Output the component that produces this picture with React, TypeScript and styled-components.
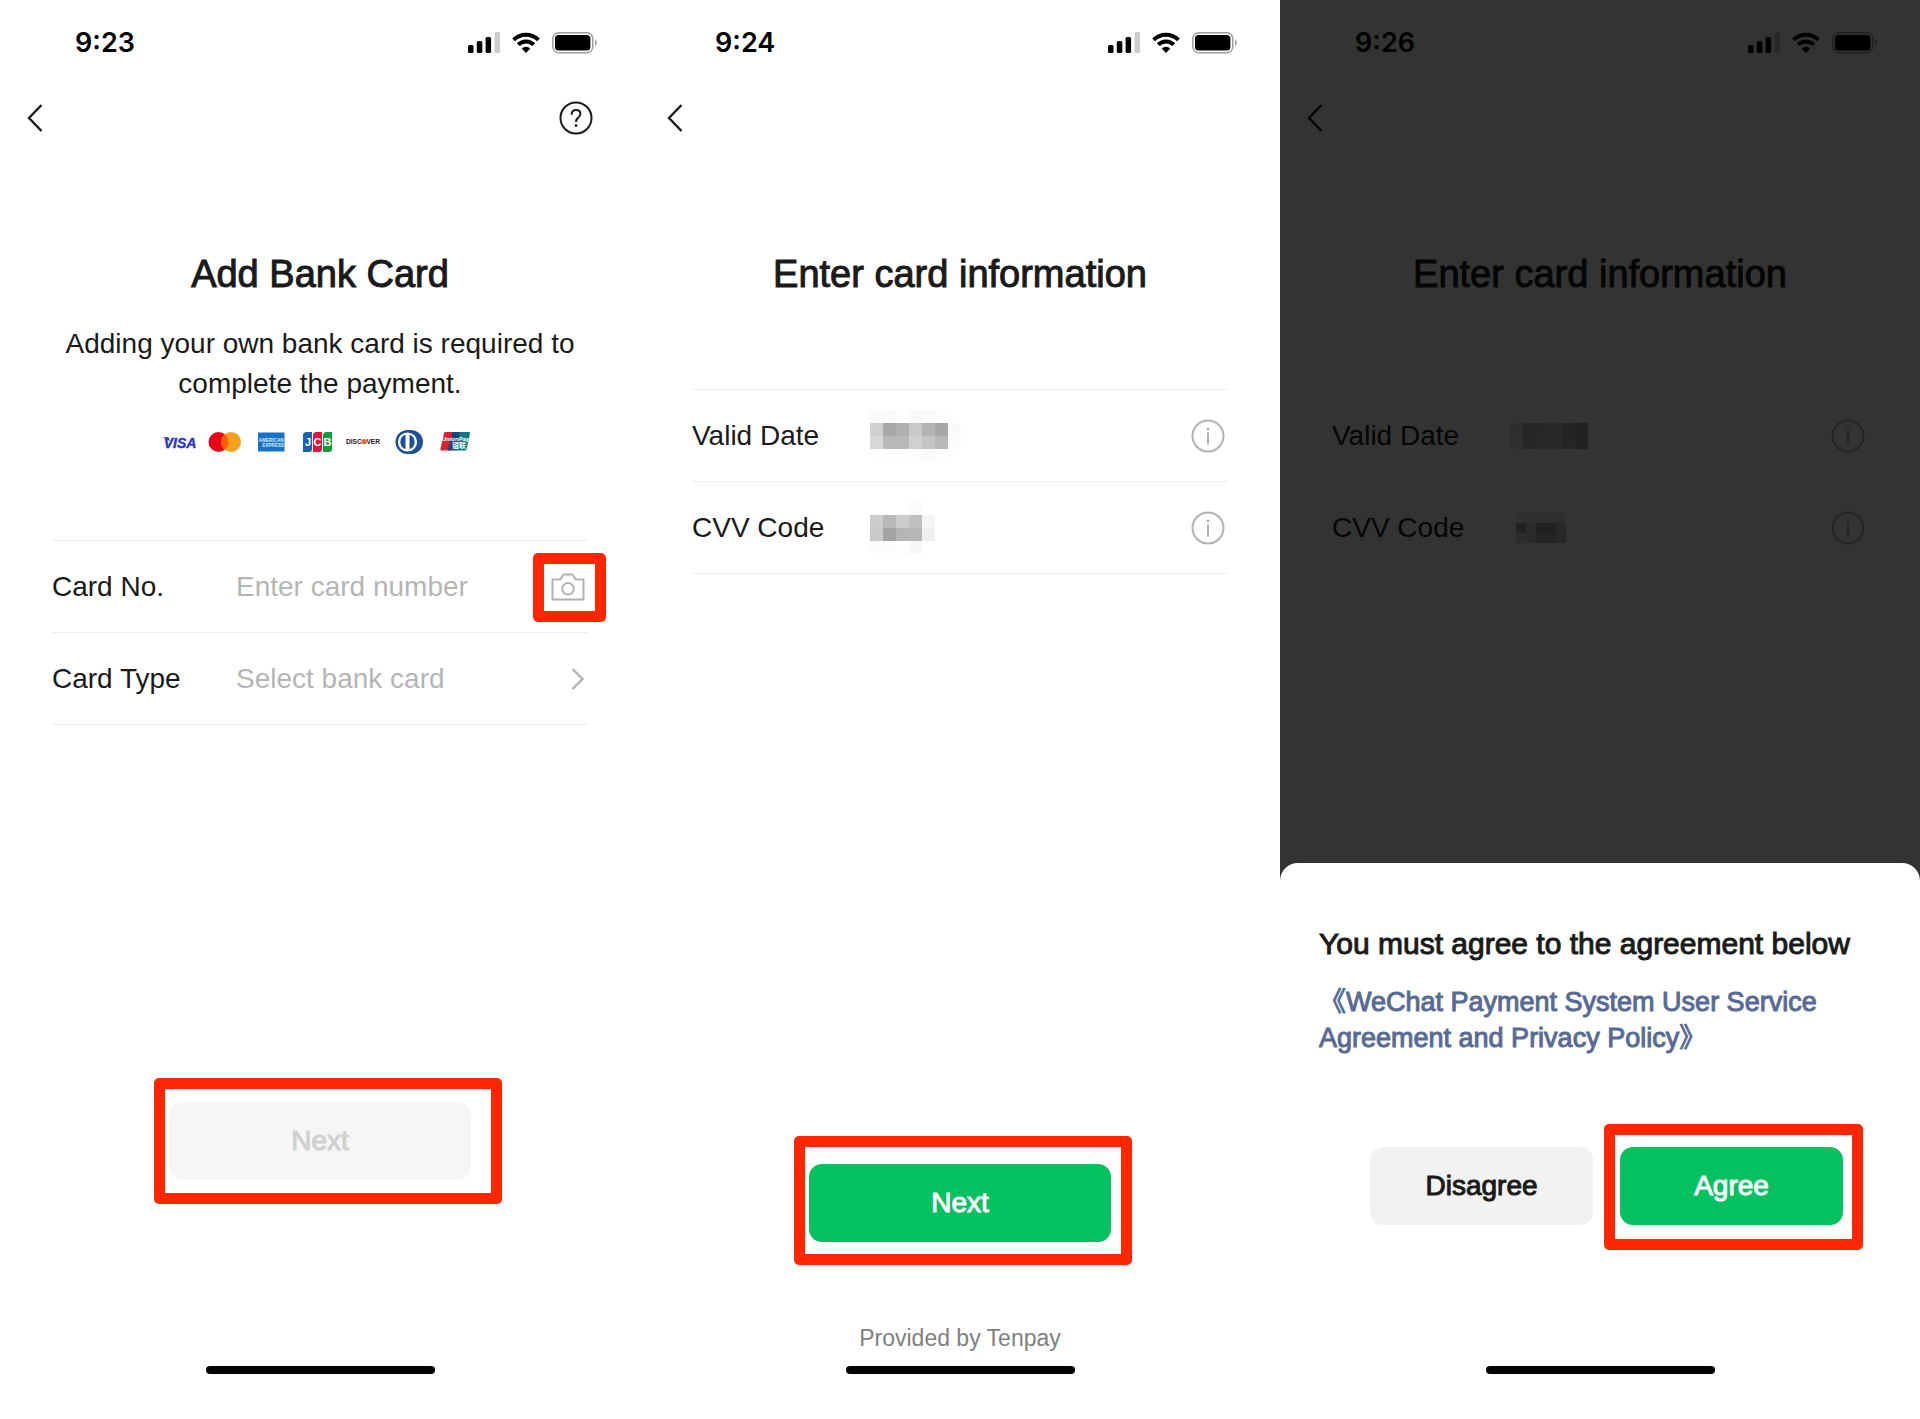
import React from 'react';
import styled, { createGlobalStyle } from 'styled-components';

const GlobalStyle = createGlobalStyle`
  *, *::before, *::after { box-sizing: border-box; }
  body {
    margin: 0;
    background: #fff;
    color: #1a1a1a;
    font-family: "Liberation Sans", Arial, "Noto Sans CJK SC", sans-serif;
    font-size: 28px;
    line-height: 40px;
  }
  h1, h2, p { margin: 0; font-weight: 400; }
  button, input, select { font: inherit; color: inherit; }
`;

const Screens = styled.main`
  display: grid;
  grid-template-columns: repeat(3, minmax(0, 1fr));
  min-height: 100vh;
`;

const Screen = styled.section`
  position: relative;
  display: flex;
  flex-direction: column;
  background: #fff;
`;

const StatusBar = styled.div`
  display: flex;
  align-items: center;
  justify-content: space-between;
  height: 86px;
  padding: 0 43px 0 75px;
  color: #000;
`;

const Clock = styled.span`
  font-family: Inter, "Liberation Sans", sans-serif;
  font-size: 27px;
  font-weight: 600;
`;

const StatusIcons = styled.div`
  display: flex;
  align-items: center;
  gap: 12px;
`;

const NavBar = styled.nav`
  display: flex;
  align-items: center;
  justify-content: space-between;
  height: 63px;
  padding: 0 47px 0 27px;
`;

const IconButton = styled.button`
  display: flex;
  padding: 0;
  border: 0;
  background: none;
  cursor: pointer;
`;

const Body = styled.div`
  display: flex;
  flex: 1;
  flex-direction: column;
  align-items: center;
  padding: 101px 52px 45px;
`;

const Title = styled.h1`
  font-size: 38px;
  line-height: 48px;
  text-align: center;
  -webkit-text-stroke: 1px currentColor;
`;

const Intro = styled.p`
  margin-top: 26px;
  text-align: center;
`;

const Brands = styled.div`
  display: flex;
  gap: 12px;
  margin-top: 26px;
  padding-right: 6px;
`;

const Fields = styled.div<{ $gap: number }>`
  align-self: stretch;
  margin-top: ${(p) => p.$gap}px;
  border-top: 1px solid #ededed;
`;

const Field = styled.div`
  display: flex;
  align-items: center;
  height: 92px;
  padding-right: 3px;
  border-bottom: 1px solid #ededed;
`;

const FieldLabel = styled.label<{ $width: number }>`
  flex: 0 0 ${(p) => p.$width}px;
`;

const FieldName = styled(FieldLabel).attrs({ as: 'span' })``;

const FieldValue = styled.div`
  flex: 1;
`;

const TextInput = styled.input`
  flex: 1;
  min-width: 0;
  padding: 0;
  border: 0;
  outline: 0;
  background: none;
  &::placeholder { color: #b5b5b5; opacity: 1; }
`;

const Select = styled.select`
  flex: 1;
  min-width: 0;
  height: 40px;
  padding: 0;
  border: 0;
  outline: 0;
  appearance: none;
  background: none;
  color: #b5b5b5;
`;

const MosaicGrid = styled.div<{ $columns: number; $cell: number }>`
  display: grid;
  grid-template-columns: repeat(${(p) => p.$columns}, ${(p) => p.$cell}px);
  grid-auto-rows: ${(p) => p.$cell}px;
`;

const Actions = styled.div`
  display: flex;
  flex-direction: column;
  align-items: center;
  margin-top: auto;
`;

const Marked = styled.div<{ $grow?: boolean }>`
  position: relative;
  display: flex;
  flex: ${(p) => (p.$grow ? '1 1 0' : 'none')};
  min-width: 0;
`;

/* Red annotation frame drawn over the control it points out. */
const Frame = styled.span<{ $outset: [number, number, number, number] }>`
  position: absolute;
  inset: ${(p) => p.$outset.map((n) => `-${n}px`).join(' ')};
  border: 11px solid #ff2600;
  border-radius: 5px;
  pointer-events: none;
`;

const Button = styled.button<{ $tone: 'green' | 'grey'; $grow?: boolean }>`
  flex: ${(p) => (p.$grow ? '1 1 0' : 'none')};
  width: 302px;
  min-width: 0;
  height: 78px;
  padding: 0;
  border: 0;
  border-radius: 13px;
  background: ${(p) => (p.$tone === 'green' ? '#05c160' : '#f2f2f2')};
  color: ${(p) => (p.$tone === 'green' ? '#fff' : '#1a1a1a')};
  -webkit-text-stroke: 1px currentColor;
  cursor: pointer;
  &:disabled {
    background: #f6f6f6;
    color: #d0d0d0;
    cursor: default;
  }
`;

const Provider = styled.p`
  margin-top: 82px;
  color: #808080;
  font-size: 23px;
  line-height: 28px;
`;

const HomeIndicator = styled.div<{ $gap: number }>`
  width: 229px;
  height: 8px;
  margin: ${(p) => p.$gap}px auto 0;
  border-radius: 4px;
  background: #000;
`;

const Backdrop = styled.div`
  position: absolute;
  inset: 0;
  display: flex;
  flex-direction: column;
  justify-content: flex-end;
  background: rgba(0, 0, 0, 0.8);
`;

const Sheet = styled.div`
  padding: 61px 39px 45px;
  border-radius: 18px 18px 0 0;
  background: #fff;
`;

const SheetTitle = styled.h2`
  font-size: 30px;
  white-space: nowrap;
  -webkit-text-stroke: 1px currentColor;
`;

const Agreement = styled.p`
  margin-top: 20px;
  font-size: 27px;
  line-height: 36px;
`;

const AgreementLink = styled.a`
  color: #576b95;
  text-decoration: none;
  -webkit-text-stroke: 1px currentColor;
`;

const Choices = styled.div`
  display: flex;
  gap: 27px;
  margin-top: 91px;
  padding: 0 38px 0 51px;
`;

const Signal = () => (
  <svg width="32" height="22" viewBox="0 0 32 22" aria-hidden="true">
    <rect x="0" y="13" width="5.5" height="8" rx="1.6" />
    <rect x="8.8" y="9" width="5.5" height="12" rx="1.6" />
    <rect x="17.600" y="5" width="5.5" height="16" rx="1.6" />
    <rect x="26.5" y="0" width="5.5" height="21" rx="1.6" fill="#ccc" />
  </svg>
);

const Wifi = () => (
  <svg width="28" height="22" viewBox="0 0 28 22" aria-hidden="true">
    <g fill="none" stroke="#000" strokeWidth="4">
      <path d="M1.6 7.8a17.6 17.6 0 0 1 24.8 0" />
      <path d="M6.2 12.7a11 11 0 0 1 15.6 0" />
    </g>
    <path d="M14 21l-4.3-4.4a6.2 6.2 0 0 1 8.6 0z" />
  </svg>
);

const Battery = () => (
  <svg width="45" height="22" viewBox="0 0 45 22" aria-hidden="true">
    <rect x="0.8" y="0.8" width="40" height="20" rx="6" fill="none" stroke="#9e9e9e" strokeWidth="1.5" />
    <rect x="3" y="3" width="35.4" height="15.6" rx="3.6" />
    <path d="M43 7.5c2.4.9 2.4 5.7 0 6.6z" fill="#9e9e9e" />
  </svg>
);

const BackIcon = () => (
  <svg width="16" height="28" viewBox="0 0 16 28" fill="none" stroke="#1a1a1a" strokeWidth="2.4" aria-hidden="true">
    <path d="M14.5 1L2 14l12.500 13" />
  </svg>
);

const HelpIcon = () => (
  <svg width="34" height="34" viewBox="0 0 34 34" fill="none" stroke="#1a1a1a" strokeWidth="2" aria-hidden="true">
    <circle cx="17" cy="17" r="15.5" />
    <path d="M12.6 13.7c0-3 1.9-4.6 4.5-4.6 2.5 0 4.3 1.6 4.3 3.9 0 1.8-.9 2.8-2.3 3.8-1.5 1-2 1.7-2 3.3v1" />
    <circle cx="17" cy="24.6" r="1.4" fill="#1a1a1a" stroke="none" />
  </svg>
);

const InfoIcon = () => (
  <svg width="34" height="34" viewBox="0 0 34 34" fill="none" stroke="#b2b2b2" strokeWidth="2" aria-hidden="true">
    <circle cx="17" cy="17" r="15.5" />
    <path d="M17 13.5v12" />
    <circle cx="17" cy="10" r="1.5" fill="#b2b2b2" stroke="none" />
  </svg>
);

const CameraIcon = () => (
  <svg width="34" height="28" viewBox="0 0 34 28" fill="none" stroke="#b2b2b2" strokeWidth="2" strokeLinejoin="round" aria-hidden="true">
    <path d="M1.5 6.5h7.8l3.2-5h9l3.2 5h7.8v20h-31z" />
    <circle cx="17" cy="15.8" r="5.8" />
  </svg>
);

const ChevronIcon = () => (
  <svg width="14" height="22" viewBox="0 0 14 22" fill="none" stroke="#b2b2b2" strokeWidth="2.4" aria-hidden="true">
    <path d="M1.5 1l10 10-10 10" />
  </svg>
);

const brandFont = '"Liberation Sans", Arial, sans-serif';

const Visa = () => (
  <svg width="34" height="24" viewBox="0 0 34 24" role="img" aria-label="Visa">
    <path d="M1 7.300h5.500l1.500 4z" fill="#2b35c9" />
    <text x="18" y="17.500" fontFamily={brandFont} fontSize="14" fontWeight="700" fontStyle="italic" fill="#2b35c9" stroke="#2b35c9" strokeWidth="0.4" textAnchor="middle">VISA</text>
  </svg>
);

const Mastercard = () => (
  <svg width="34" height="24" viewBox="0 0 34 24" role="img" aria-label="Mastercard">
    <circle cx="10.5" cy="12" r="10" fill="#eb001b" />
    <circle cx="23" cy="12" r="10" fill="#f9a01b" />
    <path d="M16.75 4.2a10 10 0 0 1 0 15.6a10 10 0 0 1 0-15.6z" fill="#ff5f00" />
  </svg>
);

const Amex = () => (
  <svg width="34" height="24" viewBox="0 0 34 24" role="img" aria-label="American Express">
    <rect x="4" y="2.5" width="26.5" height="19" fill="#1673c6" />
    <g fontFamily={brandFont} fontSize="4.6" fontWeight="700" fill="#d8ebfb" textAnchor="middle">
      <text x="17.2" y="11.5">AMERICAN</text>
      <text x="19" y="16.5">EXPRESS</text>
    </g>
  </svg>
);

const Jcb = () => (
  <svg width="34" height="24" viewBox="0 0 34 24" role="img" aria-label="JCB">
    <path d="M6.5 2H12v17a3 3 0 0 1-3 3H3V5.500A3.500 3.500 0 0 1 6.5 2z" fill="#1763ad" />
    <path d="M16.500 2H22v17a3 3 0 0 1-3 3h-6V5.500A3.500 3.500 0 0 1 16.500 2z" fill="#e4123f" />
    <path d="M26.500 2H32v17a3 3 0 0 1-3 3h-6V5.500A3.500 3.500 0 0 1 26.500 2z" fill="#159c3a" />
    <g fontFamily={brandFont} fontSize="11" fontWeight="700" fill="#fff" textAnchor="middle">
      <text x="8" y="16">J</text>
      <text x="17.5" y="16">C</text>
      <text x="27.5" y="16">B</text>
    </g>
  </svg>
);

const Discover = () => (
  <svg width="34" height="24" viewBox="0 0 34 24" role="img" aria-label="Discover">
    <g fontFamily={brandFont} fontSize="6.6" fontWeight="700" fill="#222">
      <text x="0" y="14">DISC</text>
      <text x="34" y="14" textAnchor="end">VER</text>
    </g>
    <circle cx="18.2" cy="11.6" r="2.7" fill="#f2682c" />
  </svg>
);

const Diners = () => (
  <svg width="34" height="24" viewBox="0 0 34 24" role="img" aria-label="Diners Club">
    <path d="M15.500 0h3.500a12 12 0 0 1 0 24h-3.500a12 12 0 0 1 0-24z" fill="#1f4f94" />
    <circle cx="15.5" cy="12" r="9.6" fill="#fff" />
    <path d="M13.500 4.800a7.600 7.600 0 0 0 0 14.400zM17.500 4.800a7.600 7.600 0 0 1 0 14.400z" fill="#1f4f94" />
  </svg>
);

const UnionPay = () => (
  <svg width="34" height="24" viewBox="0 0 34 24" role="img" aria-label="UnionPay">
    <path d="M7 2h10l-4.500 18.500H3.500Q2 20.500 2.400 19L6 3q.2-1 1-1z" fill="#d8232f" />
    <path d="M14 2h9l-4.500 18.500H10z" fill="#1a4480" />
    <path d="M22 2h9q1.400 0 1 1.500L28.600 19q-.4 1.500-1.800 1.500h-9z" fill="#0e7a7d" />
    <text x="17.5" y="11" fontFamily={brandFont} fontSize="6" fontWeight="700" fontStyle="italic" fill="#fff" textAnchor="middle">UnionPay</text>
    <text x="21" y="18" fontFamily='"Noto Sans CJK SC", sans-serif' fontSize="7" fontWeight="700" fill="#fff" textAnchor="middle">银联</text>
  </svg>
);

function Header({ time, help }: { time: string; help?: boolean }) {
  return (
    <>
      <StatusBar>
        <Clock>{time}</Clock>
        <StatusIcons>
          <Signal />
          <Wifi />
          <Battery />
        </StatusIcons>
      </StatusBar>
      <NavBar>
        <IconButton aria-label="Back"><BackIcon /></IconButton>
        {help && <IconButton aria-label="Help"><HelpIcon /></IconButton>}
      </NavBar>
    </>
  );
}

type MosaicData = { cell: number; rows: string[][] };

/* Pixelated stand-in for a hidden value. */
function Mosaic({ cell, rows }: MosaicData) {
  return (
    <MosaicGrid $columns={rows[0].length} $cell={cell} role="img" aria-label="Hidden value">
      {rows.flat().map((shade, i) => (
        <span key={i} style={{ background: `#${shade.repeat(3)}` }} />
      ))}
    </MosaicGrid>
  );
}

const dateMosaic: MosaicData = {
  cell: 13,
  rows: [
    ['fb', 'fa', 'fe', 'f9', 'f9', 'fd', 'ff'],
    ['d0', 'a8', 'b0', 'c9', 'b3', 'a7', 'fa'],
    ['d8', 'b8', 'b8', 'd0', 'c5', 'b9', 'fb'],
    ['fe', 'fe', 'fe', 'fd', 'fb', 'fe', 'ff'],
  ],
};

const cvvMosaic: MosaicData = {
  cell: 13,
  rows: [
    ['ff', 'ff', 'ff', 'fb', 'ff'],
    ['cd', 'b8', 'cc', 'bf', 'f5'],
    ['c9', 'a4', 'b5', 'b6', 'ef'],
    ['fc', 'fc', 'fd', 'f7', 'ff'],
  ],
};

const dimDateMosaic: MosaicData = {
  cell: 13,
  rows: [
    ['e4', 'be', 'c0', 'cd', 'b4', 'a8'],
    ['e8', 'c2', 'c6', 'cd', 'ba', 'aa'],
  ],
};

const dimCvvMosaic: MosaicData = {
  cell: 10,
  rows: [
    ['ef', 'ef', 'e6', 'e4', 'e8'],
    ['a8', 'd8', 'a0', 'a0', 'c0'],
    ['e0', 'd0', 'b4', 'b4', 'c4'],
  ],
};

function CardInformation({ date, cvv, cvvIndent }: { date: MosaicData; cvv: MosaicData; cvvIndent: number }) {
  return (
    <>
      <Title>Enter card information</Title>
      <Fields $gap={91}>
        <Field>
          <FieldName $width={178}>Valid Date</FieldName>
          <FieldValue><Mosaic {...date} /></FieldValue>
          <IconButton aria-label="About the valid date"><InfoIcon /></IconButton>
        </Field>
        <Field>
          <FieldName $width={cvvIndent}>CVV Code</FieldName>
          <FieldValue><Mosaic {...cvv} /></FieldValue>
          <IconButton aria-label="About the CVV code"><InfoIcon /></IconButton>
        </Field>
      </Fields>
    </>
  );
}

export default function App() {
  return (
    <>
      <GlobalStyle />
      <Screens>
        <Screen>
          <Header time="9:23" help />
          <Body>
            <Title>Add Bank Card</Title>
            <Intro>
              Adding your own bank card is required to
              <br />
              complete the payment.
            </Intro>
            <Brands>
              <Visa />
              <Mastercard />
              <Amex />
              <Jcb />
              <Discover />
              <Diners />
              <UnionPay />
            </Brands>
            <Fields $gap={86}>
              <Field>
                <FieldLabel htmlFor="card-number" $width={184}>Card No.</FieldLabel>
                <TextInput id="card-number" placeholder="Enter card number" />
                <Marked>
                  <IconButton aria-label="Scan card"><CameraIcon /></IconButton>
                  <Frame $outset={[20, 21, 21, 18]} />
                </Marked>
              </Field>
              <Field>
                <FieldLabel htmlFor="card-type" $width={184}>Card Type</FieldLabel>
                <Select id="card-type" defaultValue="">
                  <option value="">Select bank card</option>
                </Select>
                <ChevronIcon />
              </Field>
            </Fields>
            <Actions>
              <Marked>
                <Button $tone="grey" disabled>Next</Button>
                <Frame $outset={[24, 31, 24, 15]} />
              </Marked>
              <HomeIndicator $gap={186} />
            </Actions>
          </Body>
        </Screen>

        <Screen>
          <Header time="9:24" />
          <Body>
            <CardInformation date={dateMosaic} cvv={cvvMosaic} cvvIndent={178} />
            <Actions>
              <Marked>
                <Button $tone="green">Next</Button>
                <Frame $outset={[28, 21, 23, 15]} />
              </Marked>
              <Provider>Provided by Tenpay</Provider>
              <HomeIndicator $gap={14} />
            </Actions>
          </Body>
        </Screen>

        <Screen>
          <Header time="9:26" />
          <Body>
            <CardInformation date={dimDateMosaic} cvv={dimCvvMosaic} cvvIndent={184} />
          </Body>
          <Backdrop>
            <Sheet role="dialog" aria-labelledby="agreement-title">
              <SheetTitle id="agreement-title">You must agree to the agreement below</SheetTitle>
              <Agreement>
                <AgreementLink href="#agreement">
                  《WeChat Payment System User Service
                  <br />
                  Agreement and Privacy Policy》
                </AgreementLink>
              </Agreement>
              <Choices>
                <Button $tone="grey" $grow>Disagree</Button>
                <Marked $grow>
                  <Button $tone="green" $grow>Agree</Button>
                  <Frame $outset={[23, 20, 25, 16]} />
                </Marked>
              </Choices>
              <HomeIndicator $gap={141} />
            </Sheet>
          </Backdrop>
        </Screen>
      </Screens>
    </>
  );
}
